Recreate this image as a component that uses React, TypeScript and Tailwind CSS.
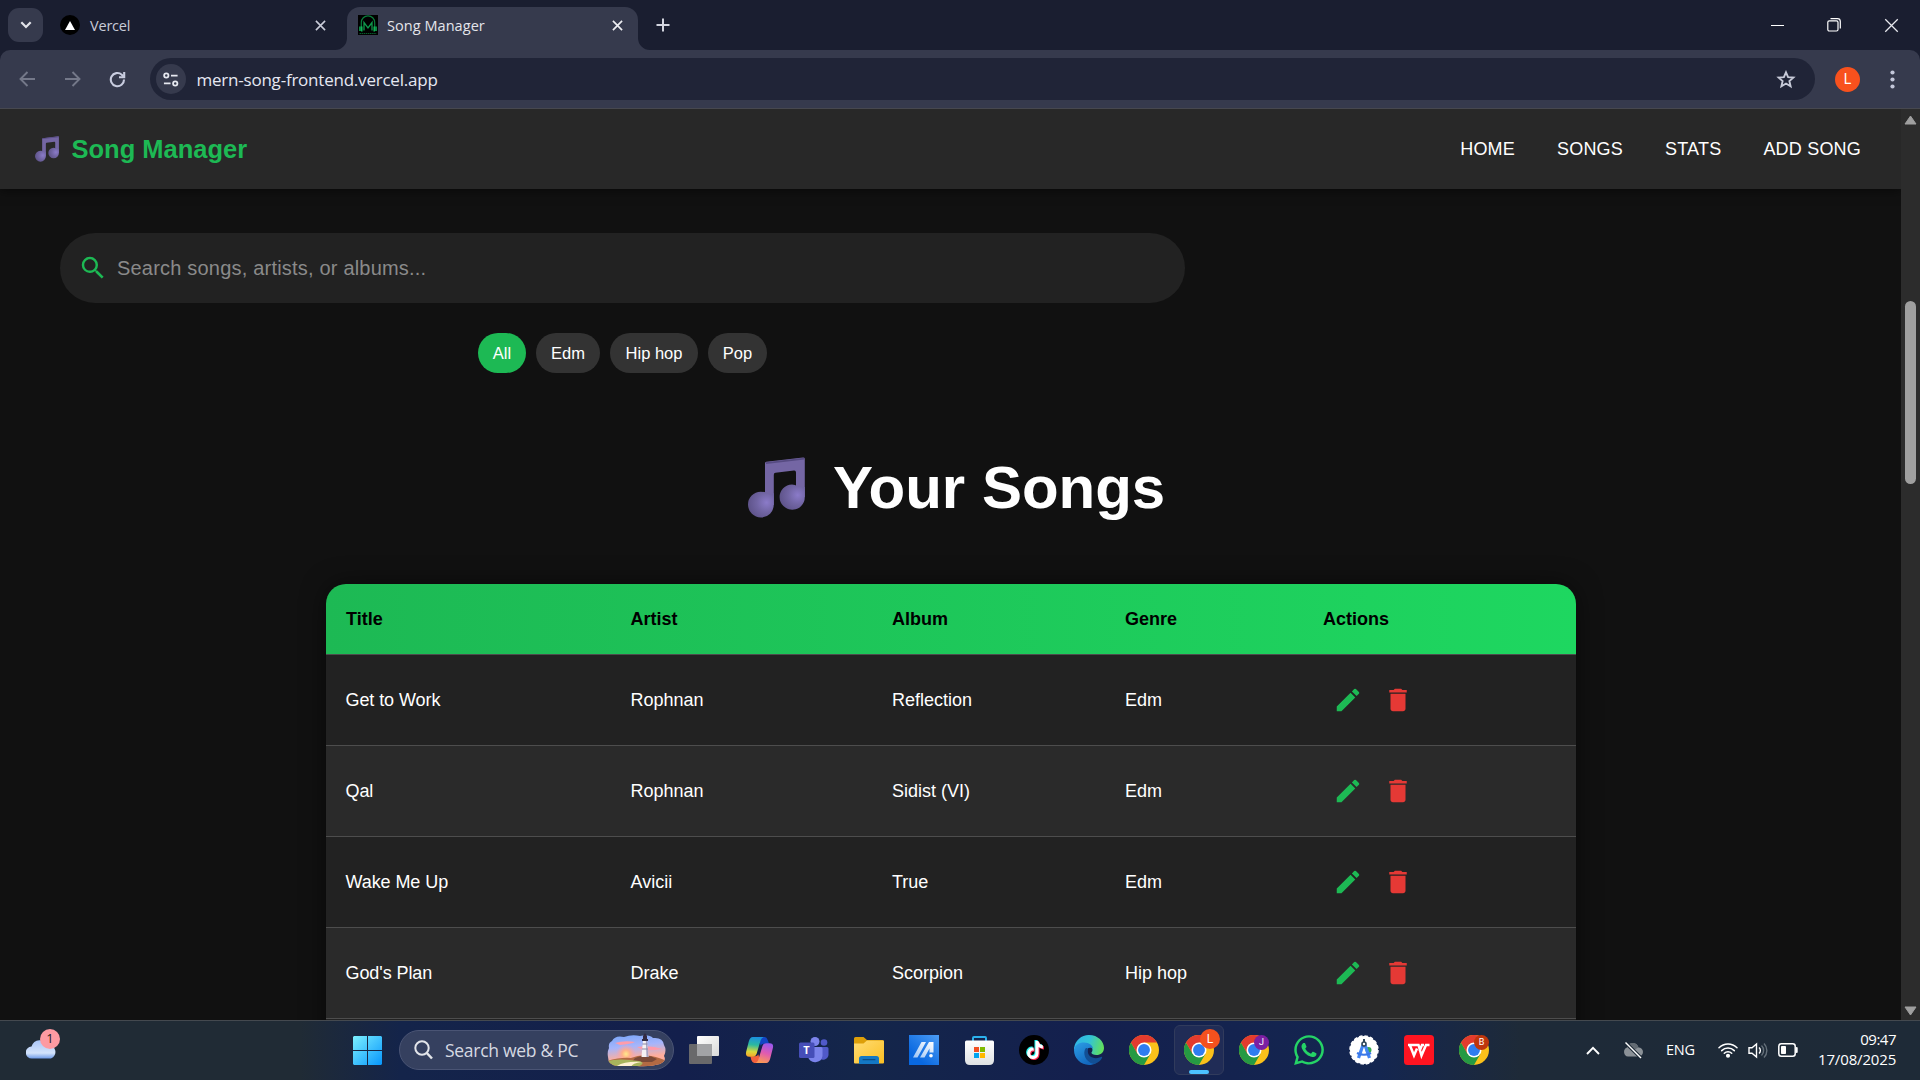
import React from "react";
import { MdSearch, MdEdit, MdDelete } from "react-icons/md";
import { FaTiktok, FaWhatsapp } from "react-icons/fa";

const UI = "font-['Open_Sans','Noto_Sans',sans-serif]";

function Notes({ id, className }: { id: string; className: string }) {
  return (
    <svg viewBox="0 0 57 61" className={className}>
      <defs>
        <radialGradient id={id + "a"} cx="0.72" cy="0.42" r="0.75">
          <stop offset="0" stopColor="#8b7bc9" />
          <stop offset="0.5" stopColor="#7165a3" />
          <stop offset="1" stopColor="#5d5288" />
        </radialGradient>
      </defs>
      <path d="M17 6.2Q17 5 18.200 4.800L55 .5Q56.800.3 56.800 2V40H48V15.500Q48 13.300 46 13.500L27.500 15.800Q25.800 16 25.800 17.800V48H17Z" fill="#7466a4" />
      <path d="M18 5.200 56.500.8V2.500L18 7Z" fill="#564b82" />
      <path d="M12.700 34.700Q19 34.700 22 38L25.800 36V47.500A12.900 12.900 0 1 1 12.700 34.700Z" fill={`url(#${id}a)`} />
      <path d="M44 27.500Q47 27.500 50 29.500L56.800 30V40A12.600 12.600 0 1 1 44 27.500Z" fill={`url(#${id}a)`} />
    </svg>
  );
}

function Cross({ size, color, w }: { size: number; color: string; w: number }) {
  return (
    <svg width={size} height={size} viewBox="0 0 12 12" fill="none" stroke={color} strokeWidth={w}>
      <path d="M1 1 11 11M11 1 1 11" />
    </svg>
  );
}

function TabStrip() {
  return (
    <div className="flex h-[50px] w-full items-center bg-[#1a1e30]">
      <div className="ml-2 flex h-[34px] w-[35px] items-center justify-center rounded-[11px] bg-[#363a4d]">
        <svg width="12" height="8" viewBox="0 0 12 8" fill="none" stroke="#e3e4ea" strokeWidth="2.200"><path d="M1.300 1.200 6 6 10.700 1.200" /></svg>
      </div>
      <div className="ml-[17px] flex w-[287px] items-center">
        <div className="flex size-5 items-center justify-center rounded-full bg-black">
          <svg width="10" height="9" viewBox="0 0 10 9"><path d="M5 0 10 9H0Z" fill="#fff" /></svg>
        </div>
        <span className="ml-[10px] pt-px text-[14.500px] tracking-[-0.2px] text-[#c8cbd8]">Vercel</span>
        <span className="ml-auto mr-[21px]"><Cross size={11} color="#c9ccd9" w={1.7} /></span>
      </div>
      <div className="relative flex h-[43px] w-[291px] items-center self-end rounded-t-[13px] bg-[#363a4d] pb-[7px]">
        <svg className="absolute bottom-0 -left-3" width="12" height="12"><path d="M12 0V12H0A12 12 0 0 0 12 0Z" fill="#363a4d" /></svg>
        <svg className="absolute bottom-0 -right-3" width="12" height="12"><path d="M0 0V12H12A12 12 0 0 1 0 0Z" fill="#363a4d" /></svg>
        <svg className="ml-[11px]" width="20" height="20" viewBox="0 0 20 20" fill="none">
          <rect width="20" height="20" fill="#000" />
          <path d="M3.300 12V7.500A6.700 6.700 0 0 1 16.700 7.500V12" stroke="#0a7d3c" strokeWidth="1.200" />
          <path d="M6 15.500V7.500L10 13 14 7.500V15.500" stroke="#0f9a4c" strokeWidth="1.300" />
          <path d="M2 11.500V16M3.800 11.500V16.500M18 11.500V16M16.200 11.500V16.500" stroke="#12d266" strokeWidth="1.300" />
          <path d="M1.500 18.500H18.500" stroke="#075c2b" strokeWidth="1" strokeDasharray="1.500 .6" />
        </svg>
        <span className="ml-[9px] pt-px text-[14.500px] tracking-[0.05px] whitespace-nowrap text-[#e4e5eb]">Song Manager</span>
        <span className="ml-auto mr-[15px]"><Cross size={11} color="#eeeef2" w={1.800} /></span>
      </div>
      <svg className="ml-[18px]" width="14" height="14" stroke="#d3d5df" strokeWidth="2"><path d="M7 0.500V13.500M.5 7H13.500" /></svg>
      <div className="ml-auto mr-[21px] flex items-center gap-[43px]">
        <svg width="13" height="13"><path d="M0 6.500H13" stroke="#fff" strokeWidth="1" /></svg>
        <svg width="14" height="14" viewBox="0 0 14 14" fill="none" stroke="#fff" strokeWidth="1.200">
          <rect x=".8" y="2.800" width="10.200" height="10.200" rx="1.500" />
          <path d="M3.500 .7H10.500A2.800 2.800 0 0 1 13.300 3.500V10.500" />
        </svg>
        <Cross size={15} color="#e8e9ef" w={1} />
      </div>
    </div>
  );
}

function Toolbar() {
  return (
    <div className="h-[58px] w-full bg-[#1a1e30]">
      <div className="flex h-full items-center rounded-t-[10px] bg-[#363a4d]">
        <svg className="ml-[19px]" width="17" height="16" viewBox="0 0 17 16" fill="none" stroke="#747889" strokeWidth="1.900"><path d="M16 8H2M8.500 1 1.500 8 8.500 15" /></svg>
        <svg className="ml-[28px]" width="17" height="16" viewBox="0 0 17 16" fill="none" stroke="#747889" strokeWidth="1.900"><path d="M1 8H15M8.500 1 15.500 8 8.500 15" /></svg>
        <svg className="ml-[28px]" width="17" height="17" viewBox="0 0 17 17" fill="none" stroke="#c9cde0" strokeWidth="2.100">
          <path d="M15 8.500A6.600 6.600 0 1 1 12.800 3.700L14.500 5.500" /><path d="M15.200 1V6.200H10" />
        </svg>
        <div className="ml-6 flex h-[42px] w-[1665px] items-center rounded-full bg-[#202437]">
          <div className="ml-[6px] flex size-[30px] items-center justify-center rounded-full bg-[#363a4d]">
            <svg width="16" height="15" viewBox="0 0 17 15" fill="none" stroke="#e6e8f0" strokeWidth="1.900">
              <circle cx="3.500" cy="3.300" r="2.300" /><path d="M8.500 3.300H15.500M1 11.700H8" /><circle cx="13" cy="11.700" r="2.300" />
            </svg>
          </div>
          <span className="ml-[10.500px] pt-px text-[17px] tracking-[-0.22px] text-[#e6e8f2]">mern-song-frontend.vercel.app</span>
          <svg className="ml-auto mr-[19px]" width="20" height="19" viewBox="0 0 20 19" fill="none" stroke="#c7cad8" strokeWidth="1.900">
            <path d="M10 2.300 12.100 7.100 17.400 7.600 13.400 11.100 14.600 16.200 10 13.500 5.400 16.200 6.600 11.100 2.600 7.600 7.900 7.100Z" />
          </svg>
        </div>
        <div className="ml-5 flex size-[25px] items-center justify-center rounded-full bg-[#f8511d] font-['Roboto',sans-serif] text-[14px] text-white">L</div>
        <svg className="ml-[30px]" width="5" height="19" fill="#c3c7da"><circle cx="2.500" cy="2.500" r="2.100" /><circle cx="2.500" cy="9.500" r="2.100" /><circle cx="2.500" cy="16.500" r="2.100" /></svg>
      </div>
    </div>
  );
}

const songs = [
  ["Get to Work", "Rophnan", "Reflection", "Edm"],
  ["Qal", "Rophnan", "Sidist (VI)", "Edm"],
  ["Wake Me Up", "Avicii", "True", "Edm"],
  ["God's Plan", "Drake", "Scorpion", "Hip hop"],
  ["", "", "", ""],
];

const cols = "grid grid-cols-[284.500px_261.500px_233px_198px_273px] items-center pl-5";

function Page() {
  return (
    <div className="flex h-[911px] w-full font-['Liberation_Sans',Arial,sans-serif]">
      <div className="flex h-full w-[1901px] flex-col overflow-hidden bg-[#111]">
        <header className="z-10 flex h-20 shrink-0 items-center bg-[#282828] pr-10 pl-[35px] shadow-[0_2px_10px_rgba(0,0,0,0.5)]">
          <Notes id="n1" className="h-[26px] w-[24px]" />
          <span className="ml-[12.500px] text-[25.500px] font-bold text-[#1db954]">Song Manager</span>
          <nav className="ml-auto flex gap-[42px] text-[18px] tracking-[0.2px] text-white">
            <a>HOME</a><a>SONGS</a><a>STATS</a><a>ADD SONG</a>
          </nav>
        </header>
        <div className="mt-11 ml-[60px] flex h-[70px] w-[1125px] shrink-0 items-center rounded-full bg-[#222] pl-[18px]">
          <MdSearch size={30} color="#1db954" />
          <span className="ml-[9px] text-[20px] tracking-[0.2px] text-[#8a8a8a]">Search songs, artists, or albums...</span>
        </div>
        <div className="mt-[30px] ml-[60px] flex h-10 w-[1125px] shrink-0 justify-center gap-[10px] text-[16.500px] text-white">
          <span className="flex w-12 items-center justify-center rounded-full bg-[#1db954]">All</span>
          <span className="flex w-16 items-center justify-center rounded-full bg-[#333]">Edm</span>
          <span className="flex w-[88px] items-center justify-center rounded-full bg-[#333]">Hip hop</span>
          <span className="flex w-[59px] items-center justify-center rounded-full bg-[#333]">Pop</span>
        </div>
        <h1 className="mt-[79px] flex h-[72px] shrink-0 items-center pl-[748px] text-[60px] leading-[72px] font-bold text-white">
          <Notes id="n2" className="mb-[2px] h-[61px] w-[57px]" />
          <span className="ml-[28px]">Your Songs</span>
        </h1>
        <section className="mt-[60px] ml-[326px] w-[1250px] shrink-0 overflow-hidden rounded-[20px] text-[18px] text-white shadow-[0_0_25px_rgba(0,0,0,0.5)]">
          <div className={`${cols} h-[70px] bg-linear-to-r from-[#1db954] to-[#1ed760] font-bold text-black`}>
            <span>Title</span><span>Artist</span><span>Album</span><span>Genre</span><span>Actions</span>
          </div>
          {songs.map((s, i) => (
            <div key={i} className={`${cols} h-[91px] border-t border-[#4d4d4d] odd:bg-[#2a2a2a] even:bg-[#222]`}>
              {s.map((t, j) => <span key={j} className="first:-ml-[0.500px] first:tracking-[-0.08px]">{t}</span>)}
              <span className="flex gap-5 pl-[10px]"><MdEdit size={30} color="#1db954" /><MdDelete size={30} color="#e53935" /></span>
            </div>
          ))}
        </section>
      </div>
      <div className="flex h-full w-[19px] flex-col items-center bg-[#2c2c2c]">
        <svg className="mt-[6px]" width="13" height="10"><path d="M6.500 1 12 9H1Z" fill="#9f9f9f" stroke="#9f9f9f" strokeLinejoin="round" /></svg>
        <div className="mt-[176px] h-[183px] w-[11px] rounded-full bg-[#9f9f9f]" />
        <svg className="mt-auto mb-1" width="13" height="10"><path d="M6.500 9 12 1H1Z" fill="#9f9f9f" stroke="#9f9f9f" strokeLinejoin="round" /></svg>
      </div>
    </div>
  );
}

function Chrome({ letter, badge }: { letter?: string; badge?: string }) {
  return (
    <div className="relative size-[30px]">
      <svg width="30" height="30" viewBox="0 0 48 48">
        <circle cx="24" cy="24" r="24" fill="#fbc11a" />
        <path d="M24 24 3.200 12A24 24 0 0 1 44.800 12H24Z" fill="#e33b2e" />
        <path d="M3.200 12A24 24 0 0 0 24 48L34.400 30 13.600 30Z" fill="#259a43" />
        <path d="M3.200 12 13.600 30 24 24 24 12Z" fill="#e33b2e" />
        <path d="M3.200 12 13.600 30 24 36 14 31Z" fill="#259a43" />
        <circle cx="24" cy="24" r="12" fill="#fff" />
        <circle cx="24" cy="24" r="9.500" fill="#2f7df0" />
      </svg>
      {letter === "L" && <span className="absolute -top-[6px] left-4 flex size-5 items-center justify-center rounded-full bg-[#f4511e] font-['Roboto',sans-serif] text-[12px] text-white">L</span>}
      {letter && letter !== "L" && (
        <span className={`absolute top-0 left-[15px] flex size-[15px] items-center justify-center rounded-full font-['Roboto',sans-serif] text-[9px] text-white ${badge}`}>{letter}</span>
      )}
    </div>
  );
}

function TaskView() {
  return (
    <svg width="30" height="28" viewBox="0 0 30 28">
      <defs><linearGradient id="tv" x2="1" y2="1"><stop stopColor="#fff" /><stop offset="1" stopColor="#d9d9d9" /></linearGradient></defs>
      <rect y="8" width="23" height="20" rx="1" fill="#69696b" />
      <rect x="8" width="22" height="20" rx="1" fill="url(#tv)" />
      <rect x="8" y="8" width="15" height="12" fill="#a2a3a6" />
    </svg>
  );
}

function Copilot() {
  return (
    <svg width="29" height="26" viewBox="0 0 29 27">
      <defs>
        <linearGradient id="cpl" x1="0.500" y1="0" x2="0.400" y2="1"><stop stopColor="#1b90e0" /><stop offset="0.400" stopColor="#2bb9a0" /><stop offset="0.750" stopColor="#d9d93b" /><stop offset="1" stopColor="#f7a52b" /></linearGradient>
        <linearGradient id="cpr" x1="0.700" y1="0" x2="0.400" y2="1"><stop stopColor="#9a58ef" /><stop offset="0.500" stopColor="#e05bb0" /><stop offset="1" stopColor="#fb9a55" /></linearGradient>
      </defs>
      <path d="M13 0H20Q22 0 23 3L24.500 7H19Q16.500 7 15.800 9Z" fill="#1345c4" />
      <path d="M16 27H9Q7 27 6 24L5 20H10Q12.500 20 13.200 18Z" fill="#f2603c" />
      <path d="M7.500 0H19Q16.500.8 15.700 3.500L11.500 17.500Q10.500 20.500 7.500 20.500H4Q-.5 20.500.6 15.500L3.300 5Q4.500 0 7.500 0Z" fill="url(#cpl)" />
      <path d="M21.500 27H10Q12.500 26.200 13.300 23.500L17.500 9.500Q18.500 6.500 21.500 6.500H25Q29.500 6.500 28.400 11.500L25.700 22Q24.500 27 21.500 27Z" fill="url(#cpr)" />
    </svg>
  );
}

function Teams() {
  return (
    <div className="relative h-[27px] w-[30px]">
      <svg width="30" height="27" viewBox="0 0 30 27">
        <circle cx="25" cy="5.500" r="3.300" fill="#5059c9" />
        <path d="M20 10H28Q29.500 10 29.500 11.500V18A5.500 5.500 0 0 1 20 21Z" fill="#5059c9" />
        <circle cx="16" cy="4.500" r="4.500" fill="#7b83eb" />
        <path d="M9 10H22Q23.500 10 23.500 11.500V19A7.500 7.500 0 0 1 9 20Z" fill="#7b83eb" />
        <rect y="5.500" width="15.500" height="15.500" rx="1.500" fill="#464eb8" />
      </svg>
      <span className="absolute top-[5px] left-0 w-[15px] text-center text-[11px] leading-[16px] font-bold text-white">T</span>
    </div>
  );
}

function Folder() {
  return (
    <svg width="30" height="27" viewBox="0 0 30 27">
      <defs><linearGradient id="fo" x2="1" y2="1"><stop stopColor="#ffdc74" /><stop offset="1" stopColor="#fbbf22" /></linearGradient></defs>
      <path d="M0 1.500Q0 0 1.500 0H9.500L13 3H28.500Q30 3 30 4.500V10H0Z" fill="#dd9f09" />
      <path d="M0 6.500H9.500L13 3.500H29Q30 3.500 30 4.500V25.500Q30 26.500 29 26.500H1Q0 26.500 0 25.500Z" fill="url(#fo)" />
      <path d="M5 27V21.500Q5 19 7.500 19H22.500Q25 19 25 21.500V27Z" fill="#1478c4" />
      <rect x="8.500" y="22" width="13" height="1.300" rx=".6" fill="#0a4d88" />
    </svg>
  );
}

function MyAsus() {
  return (
    <svg width="30" height="30" viewBox="0 0 30 30">
      <defs>
        <linearGradient id="ma" x1="1" y1="0" x2="0.300" y2="0.800"><stop stopColor="#4c9cf5" /><stop offset="1" stopColor="#0968e0" /></linearGradient>
        <linearGradient id="mb" x1="1" y1="0" x2="0" y2="1"><stop stopColor="#fff" /><stop offset="1" stopColor="#9cc4f5" /></linearGradient>
      </defs>
      <rect width="30" height="30" fill="url(#ma)" />
      <path d="M12.500 7H17L8.500 22.500H4Z M20 7H24.500V17.500H20.500V13.500L15.500 22.500H11Z" fill="url(#mb)" />
      <circle cx="22" cy="20.700" r="1.800" fill="#fff" />
    </svg>
  );
}

function Store() {
  return (
    <svg width="29" height="30" viewBox="0 0 29 30">
      <defs><linearGradient id="st" x2="0" y2="1"><stop stopColor="#fff" /><stop offset="1" stopColor="#dfe2e4" /></linearGradient></defs>
      <path d="M8 7V3Q8 2 9 2H20Q21 2 21 3V7" fill="none" stroke="#2bb1ee" strokeWidth="2" />
      <path d="M0 7Q0 5.500 1.500 5.500H27.500Q29 5.500 29 7V25Q29 30 24 30H5Q0 30 0 25Z" fill="url(#st)" />
      <path d="M9 12H14V17H9Z" fill="#f25022" /><path d="M15 12H20V17H15Z" fill="#7fba00" />
      <path d="M9 18H14V23H9Z" fill="#00a4ef" /><path d="M15 18H20V23H15Z" fill="#ffb900" />
    </svg>
  );
}

function TikTok() {
  return (
    <div className="relative size-[30px] rounded-full bg-black">
      <FaTiktok className="absolute top-[5px] left-[6px]" size={18} color="#25f4ee" />
      <FaTiktok className="absolute top-[6.500px] left-[7.500px]" size={18} color="#fe2c55" />
      <FaTiktok className="absolute top-[5.700px] left-[6.700px]" size={18} color="#fff" />
    </div>
  );
}

function Edge() {
  return (
    <svg width="30" height="30" viewBox="0 0 30 30">
      <defs>
        <linearGradient id="e1" x1="0" y1="0.300" x2="1" y2="0.500"><stop stopColor="#2fb4e8" /><stop offset="0.500" stopColor="#33c3d6" /><stop offset="1" stopColor="#62e05a" /></linearGradient>
        <linearGradient id="e2" x1="0" y1="0" x2="0.600" y2="1"><stop stopColor="#2c9ee6" /><stop offset="1" stopColor="#1266bd" /></linearGradient>
      </defs>
      <path d="M0 13A15 15 0 0 1 15 0C24 0 30 6.500 30 13C30 17.500 26.500 20 22.500 20C19 20 17 18.700 17.500 17.500C19 16 19 13 16 11C11 8 4 9 0 15Z" fill="url(#e1)" />
      <path d="M0 15C.5 10 5 7.500 10 7.500C15.500 7.500 19 10.500 19 14C17 11.500 12 12.500 11.500 17.500C11 23 16 29 22 28C20 29.500 17 30 15 30A15 15 0 0 1 0 15Z" fill="url(#e2)" />
      <path d="M11.500 13.500C8.500 18 11 27 20 29C24 28 27 25.500 28.200 22.500C28 21.500 27.300 21.800 27 22C21 25 12.500 22 14 14.500C13 12.500 12 12.800 11.500 13.500Z" fill="#124f94" />
    </svg>
  );
}

function AndroidStudio() {
  return (
    <svg width="30" height="30" viewBox="0 0 30 30" fill="none">
      <circle cx="15" cy="15" r="14" fill="#fff" />
      <circle cx="15" cy="15" r="14" stroke="#fff" strokeWidth="1.500" strokeDasharray="3.500 2" />
      <circle cx="19.500" cy="15" r="3" fill="#35a853" />
      <path d="M14 10 9.500 23M16 10 20.500 23" stroke="#4285f4" strokeWidth="3.200" />
      <path d="M8 18Q15 21.500 22 18" stroke="#3b78e7" strokeWidth="2.200" />
      <path d="M15 4V7" stroke="#30475a" strokeWidth="2" />
      <circle cx="15" cy="9" r="2" fill="#fff" stroke="#30475a" strokeWidth="1.600" />
    </svg>
  );
}

function Wps() {
  return (
    <svg width="30" height="30" viewBox="0 0 30 30" fill="none">
      <rect width="30" height="30" rx="3.500" fill="#ff1421" />
      <path d="M4 10H14.500L17.500 20.500 22 10H25.500M6 10.500 10 20.500 13 13.500M15.500 16 18 10H20" stroke="#fff" strokeWidth="2.500" />
    </svg>
  );
}

function Lighthouse() {
  return (
    <svg width="59" height="34" viewBox="0 0 59 34">
      <defs>
        <linearGradient id="sky" x2="0.200" y2="1"><stop stopColor="#6fa2f7" /><stop offset="0.450" stopColor="#a6b5fb" /><stop offset="0.800" stopColor="#ffae9c" /></linearGradient>
        <radialGradient id="sun" cx="0.500" cy="0.500" r="0.500"><stop stopColor="#ffe98a" /><stop offset="0.400" stopColor="#ffb08a" /><stop offset="1" stopColor="#ff9db0" stopOpacity="0" /></radialGradient>
        <clipPath id="lc"><path d="M5 8Q8 2 17 4Q25 1 33 3Q42 1 46 5Q56 4 57 12Q60 17 57 23Q60 28 53 31Q43 34 30 33H10Q1 32 1 24Q0 19 2 15Q1 10 5 8Z" /></clipPath>
      </defs>
      <g clipPath="url(#lc)">
        <rect width="59" height="34" fill="url(#sky)" />
        <path d="M8 10Q18 7 28 9Q24 11 13 12ZM30 14Q44 12 55 16Q45 18 36 17Z" fill="#ff9cab" />
        <circle cx="19" cy="21" r="10" fill="url(#sun)" />
        <path d="M0 28Q14 24 24 25Q34 21 44 23Q54 25 59 28V34H0Z" fill="#b36a43" />
        <path d="M28 25Q40 20 50 26L45 29H25Z" fill="#7b4a38" />
        <path d="M0 28Q12 25 32 28Q40 30 30 34H0Z" fill="#a8b45c" />
        <path d="M10 33Q18 28 35 29Q25 30 24 34Z" fill="#fff0d0" />
      </g>
      <path d="M36 7H40L41.500 24H34.500Z" fill="#f5f1f3" />
      <path d="M38.800 7H40L41.500 24H39.500Z" fill="#a7a2c0" />
      <path d="M35.300 11H40.500M35 16H41" stroke="#8a86a8" strokeWidth="1" />
      <path d="M35 6H41V8H35ZM36 3L38 0 40 3V6H36Z" fill="#332b42" />
    </svg>
  );
}

function Cell({ children }: { children?: React.ReactNode }) {
  return <div className="flex h-[50px] w-[55px] items-center justify-center">{children}</div>;
}

function Taskbar() {
  return (
    <footer className="flex h-[60px] w-full items-center border-t border-[#44494f] bg-[linear-gradient(90deg,#202b35_0px,#202b35_300px,#14244a_400px,#131f4c_680px,#14264a_860px,#14204e_1080px,#142650_1380px,#1e2a38_1520px,#1e2a37_100%)] pb-px">
      <div className="relative mb-[10px] ml-[25px] h-[32px] w-[36px]">
        <svg className="absolute top-[9px] left-[1px]" width="31" height="21" viewBox="0 0 31 21">
          <defs><linearGradient id="cl" x2="0" y2="1"><stop stopColor="#a9c5f8" /><stop offset="0.700" stopColor="#d3e3fb" /><stop offset="1" stopColor="#6f9be8" /></linearGradient></defs>
          <path d="M6 20.500A6 6 0 0 1 5.500 8.500A9 9 0 0 1 22 7A7 7 0 0 1 25 20.500Z" fill="url(#cl)" />
        </svg>
        <span className="absolute top-0 left-[15px] flex size-5 items-center justify-center rounded-full bg-[#fd9aa2] text-[13px] text-[#1c1c1c]">1</span>
      </div>
      <svg className="ml-[292px]" width="29" height="29" viewBox="0 0 29 29">
        <defs><linearGradient id="wi" x2="1" y2="1"><stop stopColor="#7cf0ff" /><stop offset="1" stopColor="#0796fc" /></linearGradient></defs>
        <path d="M1 0H14V14H0V1ZM15 0H28L29 1V14H15ZM0 15H14V29H1L0 28ZM15 15H29V28L28 29H15Z" fill="url(#wi)" />
      </svg>
      <div className="ml-[17px] flex h-10 w-[275px] items-center rounded-full border border-[#4a5474] bg-[#35405f]">
        <svg className="ml-[14px]" width="19" height="20" viewBox="0 0 19 20" fill="none" stroke="#e3e5ea" strokeWidth="2"><circle cx="8" cy="8" r="6.700" /><path d="M12.800 13 18 18.500" strokeWidth="2.500" /></svg>
        <span className="ml-[12px] pt-px text-[17.500px] tracking-[-0.28px] whitespace-nowrap text-[#d5d9e2]">Search web &amp; PC</span>
        <span className="ml-auto mr-[7px]"><Lighthouse /></span>
      </div>
      <div className="ml-[2.500px] flex items-center">
        <Cell><TaskView /></Cell>
        <Cell><Copilot /></Cell>
        <Cell><Teams /></Cell>
        <Cell><Folder /></Cell>
        <Cell><MyAsus /></Cell>
        <Cell><Store /></Cell>
        <Cell><TikTok /></Cell>
        <Cell><Edge /></Cell>
        <Cell><Chrome /></Cell>
        <Cell>
          <div className="relative flex size-[50px] shrink-0 items-center justify-center rounded-md border border-[#313b5c] bg-[#25305a]/70">
            <Chrome letter="L" />
            <span className="absolute bottom-0 left-[14px] h-1 w-5 rounded-full bg-[#4cc2ff]" />
          </div>
        </Cell>
        <Cell><Chrome letter="J" badge="bg-[#7b1fa2]" /></Cell>
        <Cell><FaWhatsapp size={34} color="#25d366" className="-m-2" /></Cell>
        <Cell><AndroidStudio /></Cell>
        <Cell><Wps /></Cell>
        <Cell><Chrome letter="B" badge="bg-[#bf360c]" /></Cell>
      </div>
      <div className="ml-auto mr-6 flex items-center text-white">
        <svg width="14" height="9" viewBox="0 0 14 9" fill="none" stroke="#fff" strokeWidth="1.900"><path d="M1 8 7 1.800 13 8" /></svg>
        <svg className="ml-[23px]" width="20" height="17" viewBox="0 0 20 17">
          <path d="M5 14.500A4.700 4.700 0 0 1 4 5.500A6 6 0 0 1 15.500 5.500A4.500 4.500 0 0 1 15.500 14.500Z" fill="#8b9197" />
          <path d="M4 5A6 6 0 0 1 15.500 5.500L9 9Z" fill="#636b73" />
          <path d="M2.500.5 18.500 16.500" stroke="#1e2a37" strokeWidth="3.500" /><path d="M2.500.5 18 16" stroke="#fff" strokeWidth="1.400" />
        </svg>
        <span className="ml-[23px] w-[30px] text-[14.500px] tracking-[-0.2px]">ENG</span>
        <svg className="ml-[22px]" width="20" height="16" viewBox="0 0 20 16" fill="none" stroke="#fff" strokeWidth="1.500" strokeLinecap="round">
          <path d="M1 5.800A12.700 12.700 0 0 1 19 5.800M3.700 8.600A8.900 8.900 0 0 1 16.300 8.600M6.300 11.300A5.200 5.200 0 0 1 13.700 11.300" /><circle cx="10" cy="13.700" r="1.300" fill="#fff" />
        </svg>
        <svg className="ml-[10px]" width="20" height="17" viewBox="0 0 20 17" fill="none" stroke="#fff" strokeWidth="1.400">
          <path d="M1 5.800H4L8.500 2V15L4 11.200H1Z" /><path d="M11 5.500A4 4 0 0 1 11 11.500" /><path d="M13.500 3.500A7 7 0 0 1 13.500 13.500M16 1.500A10 10 0 0 1 16 15.500" stroke="#65707a" />
        </svg>
        <svg className="ml-[10px]" width="20" height="14" viewBox="0 0 20 14" fill="none">
          <rect x=".8" y=".8" width="16.400" height="12.400" rx="2.500" stroke="#fff" strokeWidth="1.500" /><rect x="3" y="3" width="5" height="8" rx=".8" fill="#fff" /><path d="M18.700 5V9" stroke="#fff" strokeWidth="2" strokeLinecap="round" />
        </svg>
        <div className="mb-[2px] ml-[20px] w-[78px] text-right text-[15px] leading-[20px] tracking-[-0.150px] whitespace-nowrap">
          <div className="tracking-[-0.500px]">09:47</div>
          <div>17/08/2025</div>
        </div>
      </div>
    </footer>
  );
}

export default function App() {
  return (
    <div className={`flex h-[1080px] w-[1920px] flex-col overflow-hidden bg-[#111] ${UI}`}>
      <TabStrip />
      <Toolbar />
      <div className="h-px w-full bg-[#47484f]" />
      <Page />
      <Taskbar />
    </div>
  );
}
